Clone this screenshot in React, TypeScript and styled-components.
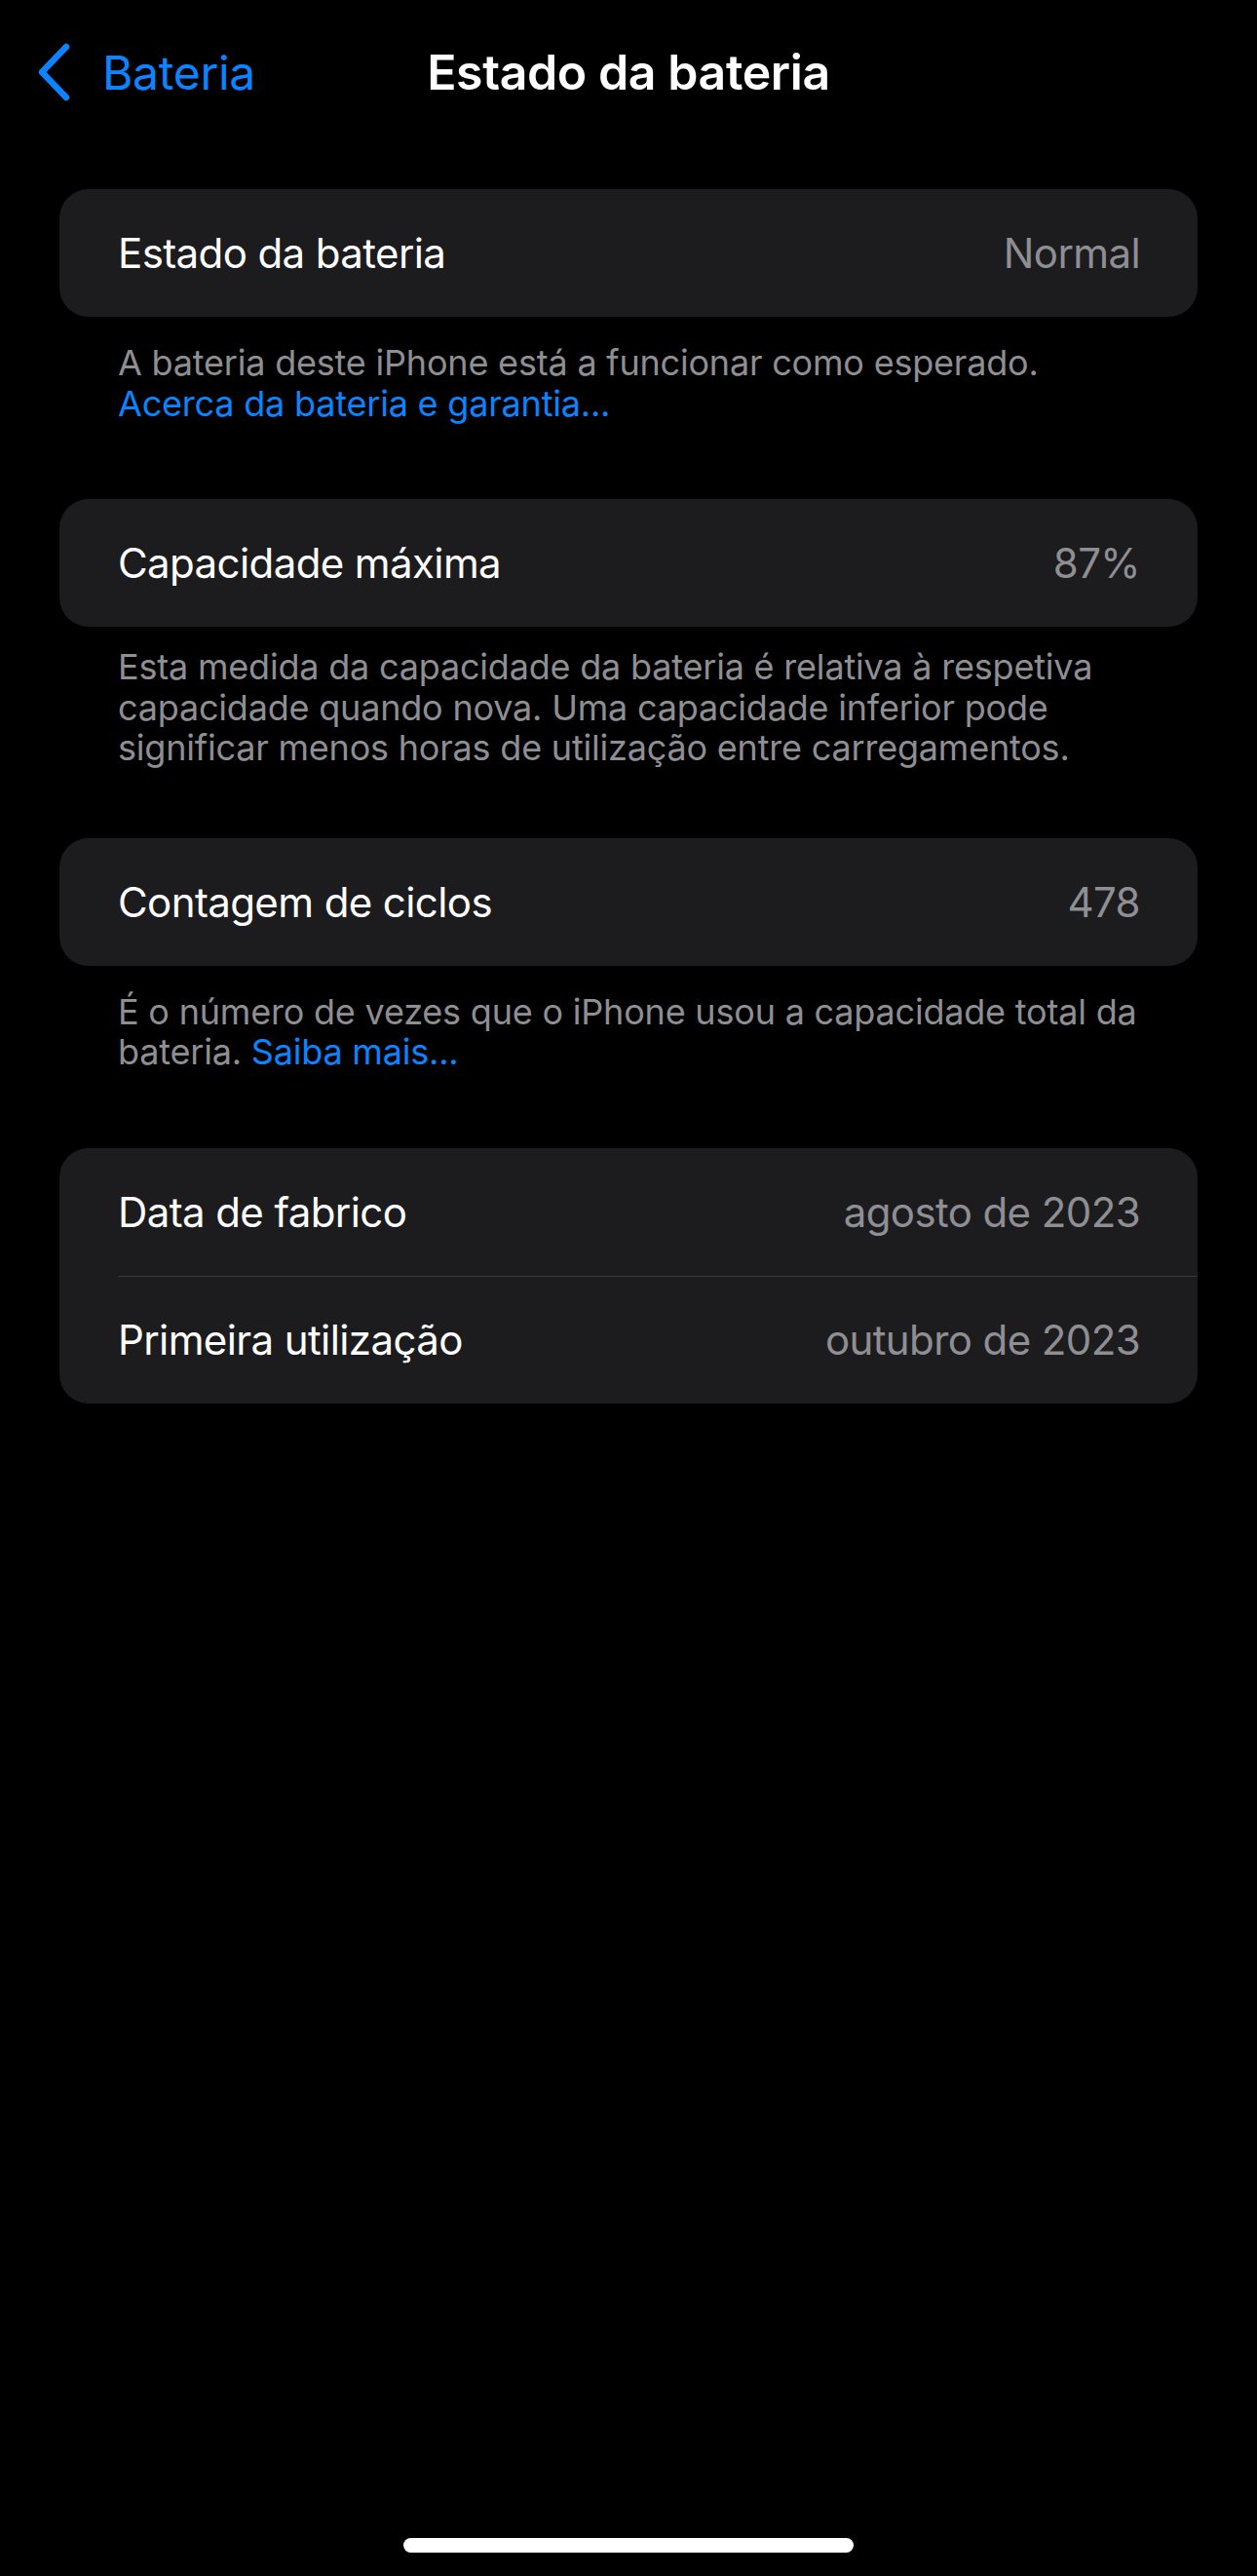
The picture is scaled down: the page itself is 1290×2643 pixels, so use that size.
import React from "react";
import styled, { createGlobalStyle } from "styled-components";

const GlobalStyle = createGlobalStyle`
  html, body {
    margin: 0;
    padding: 0;
    background: #000000;
  }
  body {
    font-family: Inter, "Noto Sans", "Liberation Sans", sans-serif;
    -webkit-font-smoothing: antialiased;
  }
  * { box-sizing: border-box; }
`;

const Page = styled.div`
  width: 1290px;
  min-height: 2643px;
  background: #000000;
  display: flex;
  flex-direction: column;
`;

const NavBar = styled.header`
  height: 148px;
  display: grid;
  grid-template-columns: 1fr auto 1fr;
  align-items: center;
`;

const BackButton = styled.div`
  display: flex;
  align-items: center;
  gap: 32px;
  padding-left: 37px;
  color: #0a84ff;
  font-size: 48px;
  font-weight: 400;
  letter-spacing: -0.3px;
`;

const BackLabel = styled.span`
  line-height: 1;
  margin-top: 2px;
`;

const Title = styled.h1`
  margin: 0;
  color: #ffffff;
  font-size: 50px;
  font-weight: 600;
  letter-spacing: -0.4px;
  line-height: 1;
`;

const Content = styled.main`
  padding: 46px 61px 0 61px;
  display: flex;
  flex-direction: column;
`;

const Section = styled.section<{ $last?: boolean; $compact?: boolean }>`
  display: flex;
  flex-direction: column;
  margin-bottom: ${(p) => (p.$last ? "0" : p.$compact ? "71px" : "77px")};
`;

const Card = styled.div`
  background: #1c1c1e;
  border-radius: 30px;
  overflow: hidden;
`;

const Row = styled.div`
  height: 131px;
  display: flex;
  align-items: center;
  justify-content: space-between;
  padding: 0 59px 0 60px;
  & + & {
    border-top: 1.5px solid #38383a;
    margin-left: 60px;
    padding-left: 0;
  }
`;

const Label = styled.span`
  color: #ffffff;
  font-size: 42px;
  letter-spacing: -0.6px;
`;

const Value = styled.span`
  color: #8e8e93;
  font-size: 42px;
  letter-spacing: -0.6px;
`;

const Footer = styled.p<{ $compact?: boolean }>`
  margin: ${(p) => (p.$compact ? "21px" : "27px")} 0 0 0;
  padding: 0 60px;
  color: #8e8e93;
  font-size: 36px;
  line-height: 41.5px;
  letter-spacing: -0.2px;
`;

const Link = styled.span`
  color: #0a84ff;
`;

const Spacer = styled.div`
  flex: 1;
`;

const HomeIndicator = styled.div`
  align-self: center;
  width: 462px;
  height: 15px;
  border-radius: 8px;
  background: #ffffff;
  margin-bottom: 24px;
`;

const Chevron = () => (
  <svg width="36" height="60" viewBox="0 0 36 60" fill="none">
    <path
      d="M31 4 L6 30 L31 56"
      stroke="#0a84ff"
      strokeWidth="6.5"
      strokeLinecap="round"
      strokeLinejoin="round"
    />
  </svg>
);

export default function App() {
  return (
    <>
      <GlobalStyle />
      <Page>
        <NavBar>
          <BackButton>
            <Chevron />
            <BackLabel>Bateria</BackLabel>
          </BackButton>
          <Title>Estado da bateria</Title>
          <div />
        </NavBar>
        <Content>
          <Section>
            <Card>
              <Row>
                <Label>Estado da bateria</Label>
                <Value>Normal</Value>
              </Row>
            </Card>
            <Footer>
              A bateria deste iPhone está a funcionar como esperado.
              <br />
              <Link>Acerca da bateria e garantia...</Link>
            </Footer>
          </Section>
          <Section $compact>
            <Card>
              <Row>
                <Label>Capacidade máxima</Label>
                <Value>87%</Value>
              </Row>
            </Card>
            <Footer $compact>
              Esta medida da capacidade da bateria é relativa à respetiva
              capacidade quando nova. Uma capacidade inferior pode significar
              menos horas de utilização entre carregamentos.
            </Footer>
          </Section>
          <Section>
            <Card>
              <Row>
                <Label>Contagem de ciclos</Label>
                <Value>478</Value>
              </Row>
            </Card>
            <Footer>
              É o número de vezes que o iPhone usou a capacidade total da
              bateria. <Link>Saiba mais...</Link>
            </Footer>
          </Section>
          <Section $last>
            <Card>
              <Row>
                <Label>Data de fabrico</Label>
                <Value>agosto de 2023</Value>
              </Row>
              <Row>
                <Label>Primeira utilização</Label>
                <Value>outubro de 2023</Value>
              </Row>
            </Card>
          </Section>
        </Content>
        <Spacer />
        <HomeIndicator />
      </Page>
    </>
  );
}
